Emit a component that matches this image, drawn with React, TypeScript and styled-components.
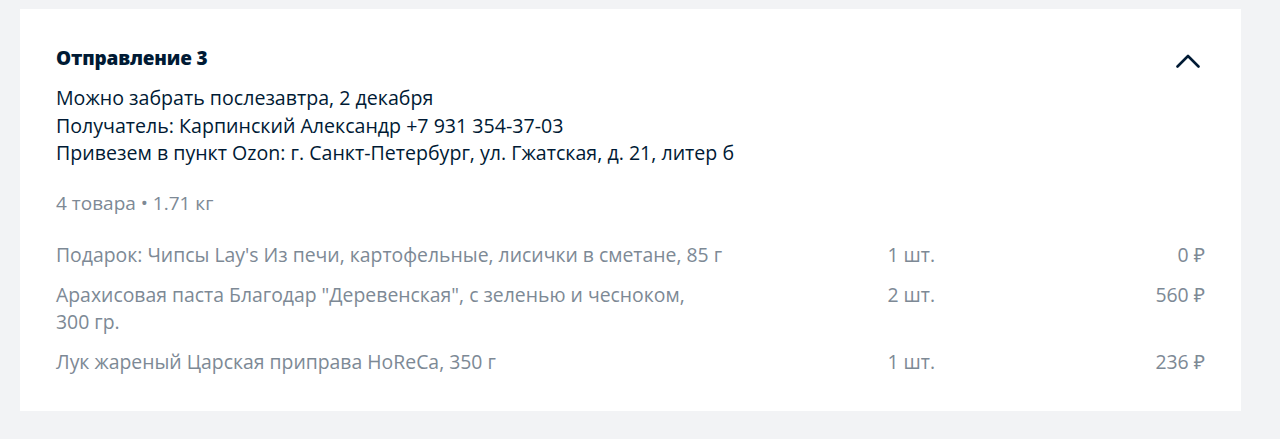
import React from "react";
import styled, { createGlobalStyle } from "styled-components";

const Global = createGlobalStyle`
  html, body { margin: 0; padding: 0; background: #f2f3f5; }
  body { font-family: "Open Sans", "Noto Sans", sans-serif; }
`;

const Page = styled.div`
  padding: 9px 39px 28px 20px;
`;

const Card = styled.section`
  background: #ffffff;
  padding: 36px 36px 38px 36px;
  box-sizing: border-box;
  height: 402px;
`;

const Header = styled.div`
  display: flex;
  justify-content: space-between;
  align-items: flex-start;
`;

const Title = styled.h2`
  margin: 0;
  font-size: 19px;
  line-height: 26px;
  font-weight: 800;
  color: #001a34;
  letter-spacing: -0.2px;
`;

const Toggle = styled.button`
  border: 0;
  background: none;
  padding: 0;
  margin: 9px 5px 0 0;
  width: 24px;
  height: 14px;
  display: flex;
  cursor: pointer;
`;

const Info = styled.div`
  margin-top: 13px;
  color: #001a34;
  font-size: 19.6px;
  line-height: 27.5px;
`;

const Summary = styled.div`
  margin-top: 23px;
  color: #7d8995;
  font-size: 19px;
  line-height: 26px;
`;

const Items = styled.div`
  margin-top: 25px;
  display: flex;
  flex-direction: column;
  gap: 13px;
`;

const Row = styled.div`
  display: grid;
  grid-template-columns: 672px 1fr 270px;
  color: #7d8995;
  font-size: 19.4px;
  line-height: 27px;
`;

const Name = styled.div``;

const Qty = styled.div`
  text-align: right;
`;

const Price = styled.div`
  text-align: right;
`;

const items = [
  { name: "Подарок: Чипсы Lay's Из печи, картофельные, лисички в сметане, 85 г", qty: "1 шт.", price: "0 ₽" },
  { name: "Арахисовая паста Благодар \"Деревенская\", с зеленью и чесноком, 300\u00A0гр.", qty: "2 шт.", price: "560 ₽" },
  { name: "Лук жареный Царская приправа HoReCa, 350 г", qty: "1 шт.", price: "236 ₽" },
];

export default function App() {
  return (
    <>
      <Global />
      <Page>
        <Card>
          <Header>
            <Title>Отправление 3</Title>
            <Toggle aria-label="Свернуть">
              <svg width="24" height="14" viewBox="0 0 24 14" fill="none">
                <path d="M1.5 12.5 L12 2 L22.5 12.5" stroke="#001a34" strokeWidth="2.6" strokeLinecap="round" strokeLinejoin="round" />
              </svg>
            </Toggle>
          </Header>
          <Info>
            <div>Можно забрать послезавтра, 2 декабря</div>
            <div>Получатель: Карпинский Александр +7 931 354-37-03</div>
            <div>Привезем в пункт Ozon: г. Санкт-Петербург, ул. Гжатская, д. 21, литер б</div>
          </Info>
          <Summary>4 товара • 1.71 кг</Summary>
          <Items>
            {items.map((it) => (
              <Row key={it.name}>
                <Name>{it.name}</Name>
                <Qty>{it.qty}</Qty>
                <Price>{it.price}</Price>
              </Row>
            ))}
          </Items>
        </Card>
      </Page>
    </>
  );
}
